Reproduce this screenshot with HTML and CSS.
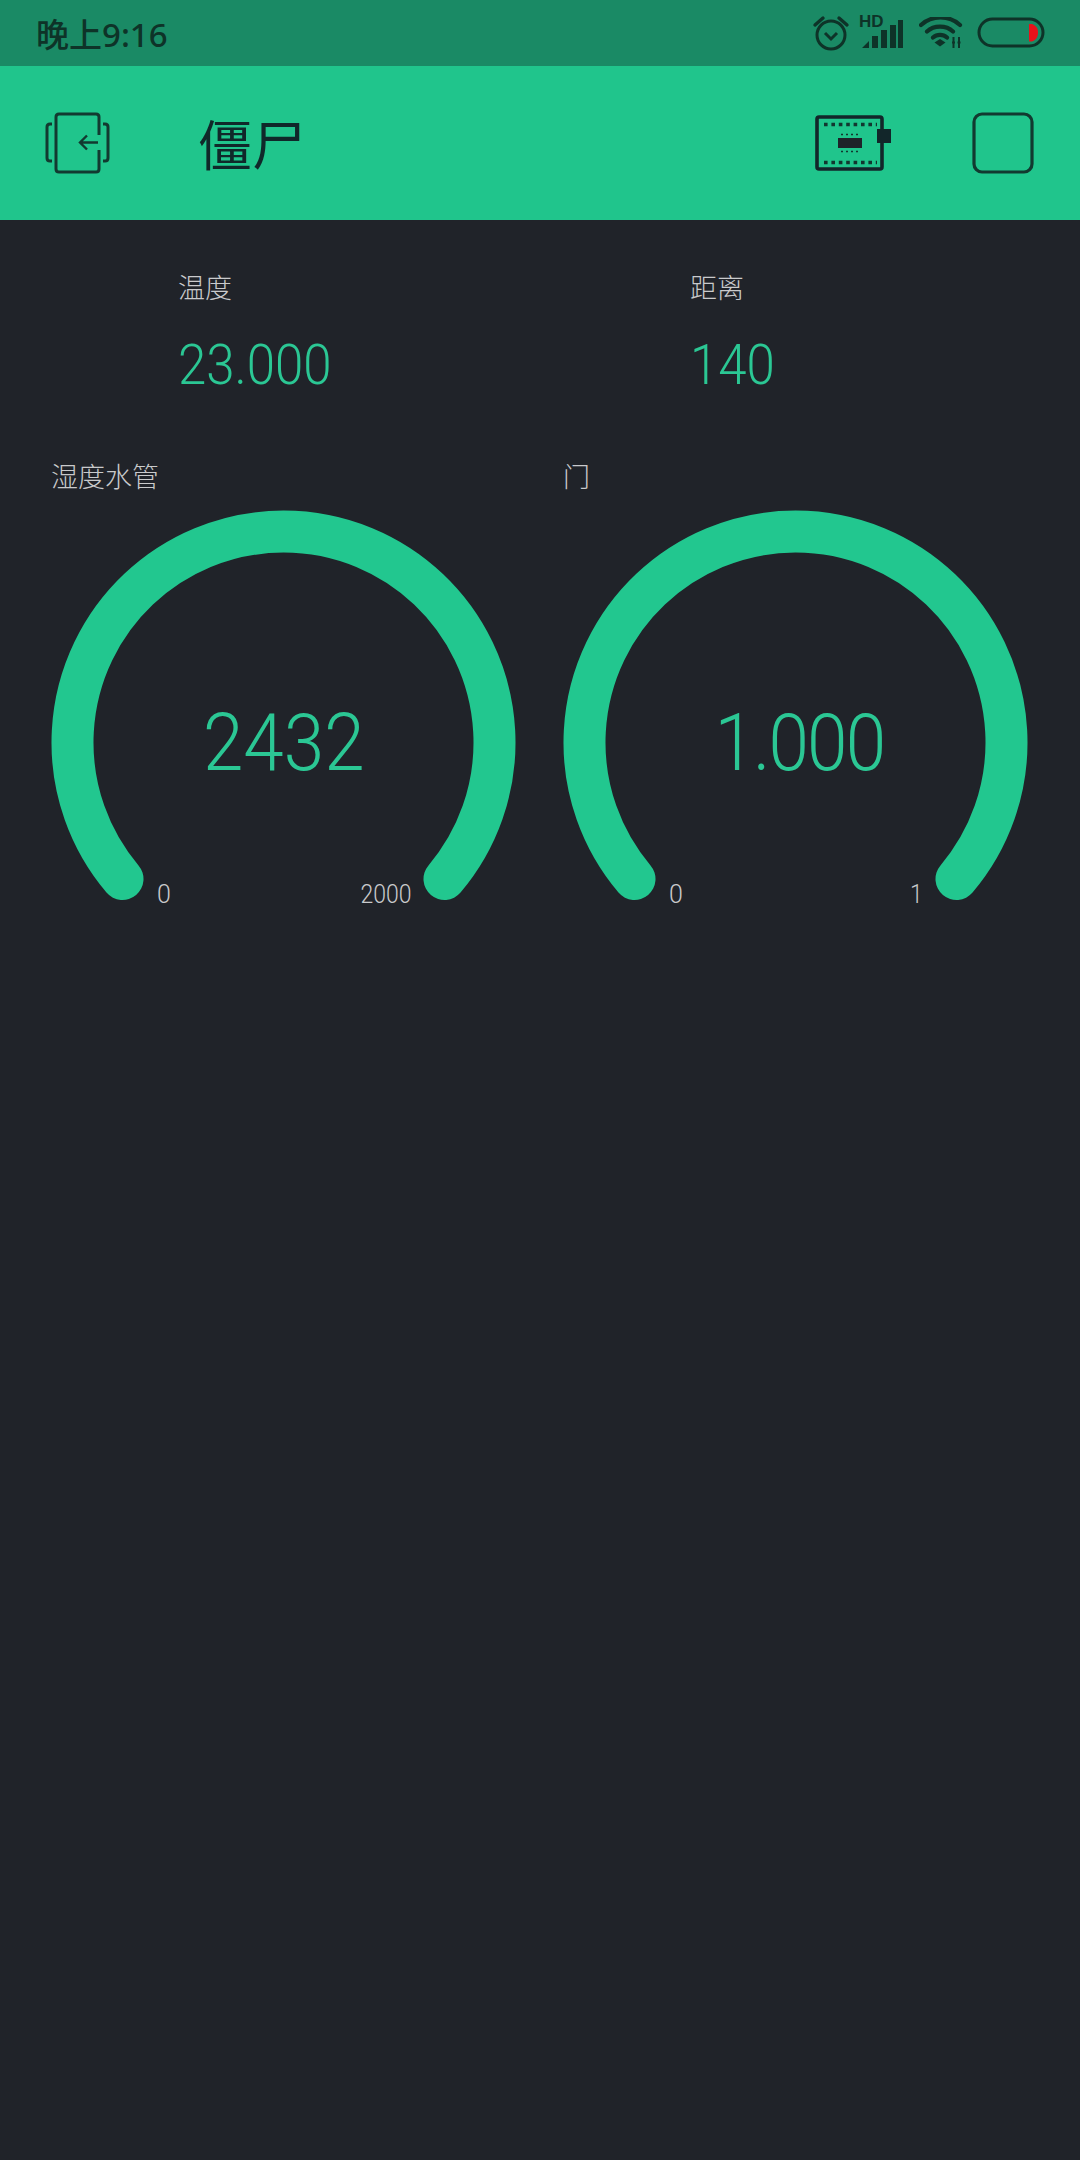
FILE: index.html
```html
<!DOCTYPE html>
<html lang="zh">
<head>
<meta charset="utf-8">
<title>僵尸</title>
<link rel="stylesheet" href="styles.css">
</head>
<body>
<div class="status">
  <span class="clock">晚上9:16</span>
  <div class="status-icons">
    <svg class="ic-alarm" width="38" height="36" viewBox="0 0 38 36"><circle cx="19" cy="20" r="14" fill="none" stroke="#0e3328" stroke-width="3"/><path d="M13 18l6 6 6-6" fill="none" stroke="#0e3328" stroke-width="3"/><path d="M3 10L11 3M35 10L27 3" stroke="#0e3328" stroke-width="3.4" stroke-linecap="round"/></svg>
    <div class="signal">
      <span class="hd">HD</span>
      <svg width="42" height="30" viewBox="0 0 42 30"><path d="M1 29L8 22V29ZM11 17h6v12h-6ZM20 11h6v18h-6ZM29 6h6v23h-6ZM37 1h5v28h-5Z" fill="#0e3328"/></svg>
    </div>
    <svg class="ic-wifi" width="44" height="32" viewBox="0 0 44 32"><path d="M2 8C13-2 30-2 41 8M8 14.500C15 8 27 8 34 14.500M14 20.500C18 17 24 17 28 20.500" fill="none" stroke="#0e3328" stroke-width="4.200" stroke-linecap="round"/><path d="M15.500 25.500L21 22 26.500 25.500 21 29.500Z" fill="#0e3328"/><path d="M34.500 20V31M40 20V31" stroke="#0e3328" stroke-width="2"/><path d="M33 25.500H36M38.500 25.500H41.500" stroke="#0e3328" stroke-width="2"/></svg>
    <svg width="68" height="32" viewBox="0 0 68 32"><rect x="2" y="2" width="64" height="27" rx="13.500" fill="none" stroke="#0e3328" stroke-width="3"/><path d="M52 7h3c5 2 6 5 6 8.500s-1 7-6 9h-3Z" fill="#e8121a"/></svg>
  </div>
</div>
<header class="bar">
  <svg class="ic-back" width="66" height="62" viewBox="0 0 66 62"><path d="M54 23V5Q54 2 51 2H14Q11 2 11 5V57Q11 60 14 60H51Q54 60 54 57V38" fill="none" stroke="#123a30" stroke-width="3"/><path d="M7 12H5Q2 12 2 15V46Q2 49 5 49H7M58 12H60Q63 12 63 15V46Q63 49 60 49H58" fill="none" stroke="#123a30" stroke-width="3"/><path d="M53 30.500H35M42 23.500L35 30.500 42 37.500" fill="none" stroke="#123a30" stroke-width="2.400"/></svg>
  <h1 class="title">僵尸</h1>
  <svg class="ic-board" width="76" height="58" viewBox="0 0 76 58"><rect x="2" y="2" width="65" height="52" rx="2" fill="none" stroke="#12262a" stroke-width="3.600"/><path d="M9 9.500H62M9 47.500H62" stroke="#12362f" stroke-width="3.600" stroke-dasharray="3.600 3.800"/><rect x="23" y="23" width="24" height="10" fill="#1e2229"/><path d="M26 19.500H45M26 36.500H45" stroke="#12362f" stroke-width="1.500" stroke-dasharray="2 3"/><rect x="62" y="14" width="14" height="14" fill="#12262a"/></svg>
  <svg class="ic-square" width="62" height="62" viewBox="0 0 62 62"><rect x="2" y="2" width="58" height="58" rx="8" fill="none" stroke="#123a30" stroke-width="3.200"/></svg>
</header>
<main class="board">
  <section class="widget">
    <div class="label">温度</div>
    <div class="value"><span class="squeeze">23.000</span></div>
  </section>
  <section class="widget">
    <div class="label">距离</div>
    <div class="value"><span class="squeeze">140</span></div>
  </section>
  <section class="gauge">
    <div class="label">湿度水管</div>
    <div class="dial">
      <svg class="arc" width="465" height="400" viewBox="0 0 465 400"><path d="M71.500 368A211 211 0 1 1 393.500 368" fill="none" stroke="#22c78f" stroke-width="42" stroke-linecap="round"/></svg>
      <div class="reading"><span class="squeeze-c">2432</span></div>
      <div class="limits"><span class="squeeze-l">0</span><span class="squeeze-r">2000</span></div>
    </div>
  </section>
  <section class="gauge">
    <div class="label">门</div>
    <div class="dial">
      <svg class="arc" width="465" height="400" viewBox="0 0 465 400"><path d="M71.500 368A211 211 0 1 1 393.500 368" fill="none" stroke="#22c78f" stroke-width="42" stroke-linecap="round"/></svg>
      <div class="reading reading-tight"><span class="squeeze-c">1.000</span></div>
      <div class="limits"><span class="squeeze-l">0</span><span class="squeeze-r">1</span></div>
    </div>
  </section>
</main>
</body>
</html>
```
FILE: styles.css
```css
* { box-sizing: border-box; }
html, body { margin: 0; padding: 0; }
body {
  width: 1080px;
  height: 2160px;
  background: #202329;
  font-family: "Noto Sans CJK SC", "Noto Sans", sans-serif;
  overflow: hidden;
}
.status {
  height: 66px;
  background: #1a8a65;
  display: flex;
  align-items: center;
  justify-content: space-between;
  padding: 0 35px 0 36px;
}
.clock {
  font-family: "Noto Sans", "Noto Sans CJK SC", sans-serif;
  font-size: 33px;
  font-weight: 500;
  color: #0e3328;
  line-height: 1;
  position: relative;
  top: 1px;
}
.status-icons { display: flex; align-items: center; gap: 14px; }
.ic-alarm { margin-right: -3px; }
.signal { position: relative; width: 42px; height: 30px; margin: 2px 2px 0 0; }
.hd {
  position: absolute;
  left: -2px;
  top: -6px;
  font-family: "Liberation Sans", sans-serif;
  font-size: 17px;
  font-weight: 700;
  color: #0e3328;
  line-height: 1;
}
.bar {
  height: 154px;
  background: #20c58c;
  display: flex;
  align-items: center;
  padding: 0 46px 0 45px;
}
.title {
  margin: 0 0 0 87px;
  font-size: 54px;
  font-weight: 400;
  color: #10282a;
  line-height: 1;
  flex: 1;
}
.ic-back { flex: none; }
.ic-board { margin-right: 81px; margin-top: 1px; }
.board {
  display: grid;
  grid-template-columns: 512px 512px;
  padding: 0 0 0 51px;
}
.widget { padding: 49px 0 0 127px; height: 238px; }
.label {
  font-size: 27px;
  font-weight: 300;
  color: #c9cacc;
  line-height: 36px;
}
.value {
  margin-top: 27px;
  font-family: Roboto, sans-serif;
  font-size: 56px;
  font-weight: 300;
  color: #2bc794;
  line-height: 66px;
}
.squeeze { display: inline-block; transform: scaleX(0.91); transform-origin: left center; }
.gauge { height: 600px; }
.dial { position: relative; width: 465px; height: 400px; margin: 17px 0 0 0; }
.arc { display: block; overflow: visible; }
.reading {
  position: absolute;
  left: 0;
  right: 0;
  top: 182px;
  text-align: center;
  font-family: Roboto, sans-serif;
  font-size: 80px;
  font-weight: 300;
  color: #2bc794;
  line-height: 100px;
}
.reading-tight { letter-spacing: -2px; padding-left: 8px; }
.squeeze-c { display: inline-block; transform: scaleX(0.91); }
.limits {
  position: absolute;
  left: 106px;
  right: 105px;
  top: 369px;
  display: flex;
  justify-content: space-between;
  font-family: Roboto, sans-serif;
  font-size: 25px;
  font-weight: 300;
  color: #c9cacc;
  line-height: 30px;
}
.squeeze-l { display: inline-block; transform-origin: left center; }
.squeeze-r { display: inline-block; transform: scaleX(0.92); transform-origin: right center; }
```
